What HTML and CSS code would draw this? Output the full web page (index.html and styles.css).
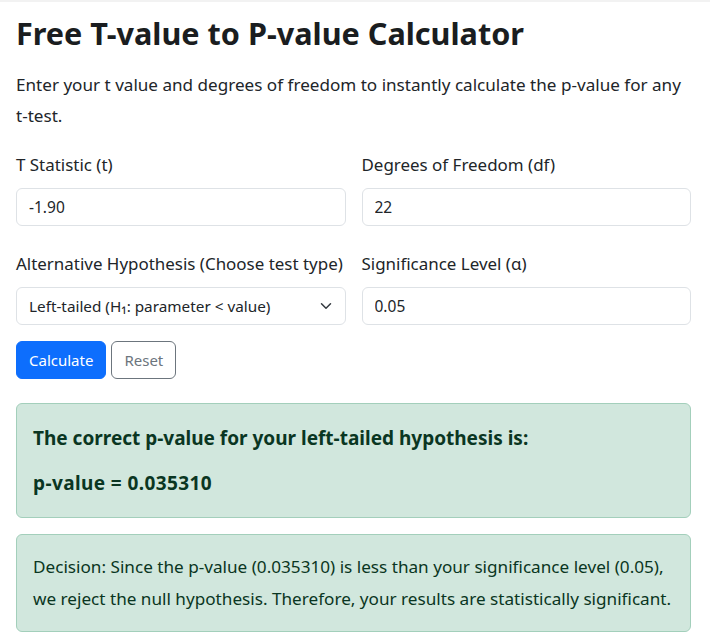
FILE: index.html
```html
<!DOCTYPE html>
<html lang="en">
<head>
<meta charset="utf-8">
<title>Free T-value to P-value Calculator</title>
<link rel="stylesheet" href="styles.css">
</head>
<body>
<div class="topline"></div>
<main class="page">
  <h1 class="title">Free T-value to P-value Calculator</h1>
  <p class="intro">Enter your t value and degrees of freedom to instantly calculate the p-value for any <span class="nowrap">t-test.</span></p>

  <form class="calc-form">
    <div class="field">
      <label class="field-label" for="t">T Statistic (t)</label>
      <input class="control" id="t" type="text" value="-1.90">
    </div>
    <div class="field">
      <label class="field-label" for="df">Degrees of Freedom (df)</label>
      <input class="control" id="df" type="text" value="22">
    </div>
    <div class="field">
      <label class="field-label" for="alt">Alternative Hypothesis (Choose test type)</label>
      <div class="select-wrap">
        <select class="control select" id="alt">
          <option>Left-tailed (H₁: parameter &lt; value)</option>
          <option>Right-tailed (H₁: parameter &gt; value)</option>
          <option>Two-tailed (H₁: parameter ≠ value)</option>
        </select>
        <svg class="chevron" width="16" height="12" viewBox="0 0 16 16" aria-hidden="true"><path d="m2 5 6 6 6-6" fill="none" stroke="#343a40" stroke-linecap="round" stroke-linejoin="round" stroke-width="2"/></svg>
      </div>
    </div>
    <div class="field">
      <label class="field-label" for="alpha">Significance Level (α)</label>
      <input class="control" id="alpha" type="text" value="0.05">
    </div>
  </form>

  <div class="actions">
    <button class="btn btn-primary" type="button">Calculate</button>
    <button class="btn btn-outline" type="button">Reset</button>
  </div>

  <div class="alert alert-result">
    <div class="result-line first">The correct p-value for your left-tailed hypothesis is:</div>
    <div class="result-line value">p-value = 0.035310</div>
  </div>

  <div class="alert alert-decision">
    Decision: Since the p-value (0.035310) is less than your significance level (0.05), we reject the null hypothesis. Therefore, your results are statistically significant.
  </div>
</main>
</body>
</html>
```

FILE: styles.css
```css
* { box-sizing: border-box; }

html, body {
  margin: 0;
  padding: 0;
  background: #ffffff;
}

body {
  font-family: "Noto Sans", "Open Sans", sans-serif;
  color: #212529;
}

.topline {
  height: 2px;
  background: #f2f2f2;
}

.page {
  padding: 12px 19px 0 16px;
}

.title {
  margin: 0 0 16px 0;
  font-size: 30.6px;
  font-weight: 700;
  line-height: 39px;
  color: #1a1d20;
}

.intro {
  margin: 0 0 20px 0;
  font-size: 17.1px;
  line-height: 31px;
}

.nowrap {
  white-space: nowrap;
}

.calc-form {
  display: grid;
  grid-template-columns: 1fr 1fr;
  column-gap: 16px;
  row-gap: 24px;
}

.field {
  display: flex;
  flex-direction: column;
}

.field-label {
  font-size: 16.95px;
  line-height: 28px;
  margin-bottom: 9px;
  white-space: nowrap;
}

.control {
  display: block;
  width: 100%;
  height: 38px;
  padding: 6px 12px;
  font-family: inherit;
  font-size: 15.5px;
  line-height: 24px;
  color: #212529;
  background: #ffffff;
  border: 1px solid #dee2e6;
  border-radius: 6px;
  outline: none;
}

.select-wrap {
  position: relative;
}

.select {
  appearance: none;
  -webkit-appearance: none;
  padding-right: 36px;
  font-size: 15.3px;
}

.chevron {
  position: absolute;
  right: 12px;
  top: 13px;
  pointer-events: none;
}

.actions {
  display: flex;
  gap: 5px;
  margin-top: 16px;
}

.btn {
  height: 38px;
  padding: 6px 12px;
  font-family: inherit;
  font-size: 15px;
  line-height: 24px;
  border-radius: 6px;
  border: 1px solid transparent;
  background: transparent;
  cursor: pointer;
}

.btn-primary {
  color: #ffffff;
  background: #0d6efd;
  border-color: #0d6efd;
}

.btn-outline {
  color: #6c757d;
  border-color: #6c757d;
}

.alert {
  padding: 16px;
  border: 1px solid #a3cfbb;
  border-radius: 6px;
  background: #d1e7dd;
  color: #0a3622;
}

.alert-result {
  margin-top: 24px;
}

.result-line {
  font-size: 19px;
  font-weight: 700;
  line-height: 36px;
}

.result-line.first {
  margin-bottom: 9px;
}

.result-line.value {
  letter-spacing: 0.4px;
}

.alert-decision {
  margin-top: 16px;
  font-size: 17.15px;
  line-height: 32px;
}
```
